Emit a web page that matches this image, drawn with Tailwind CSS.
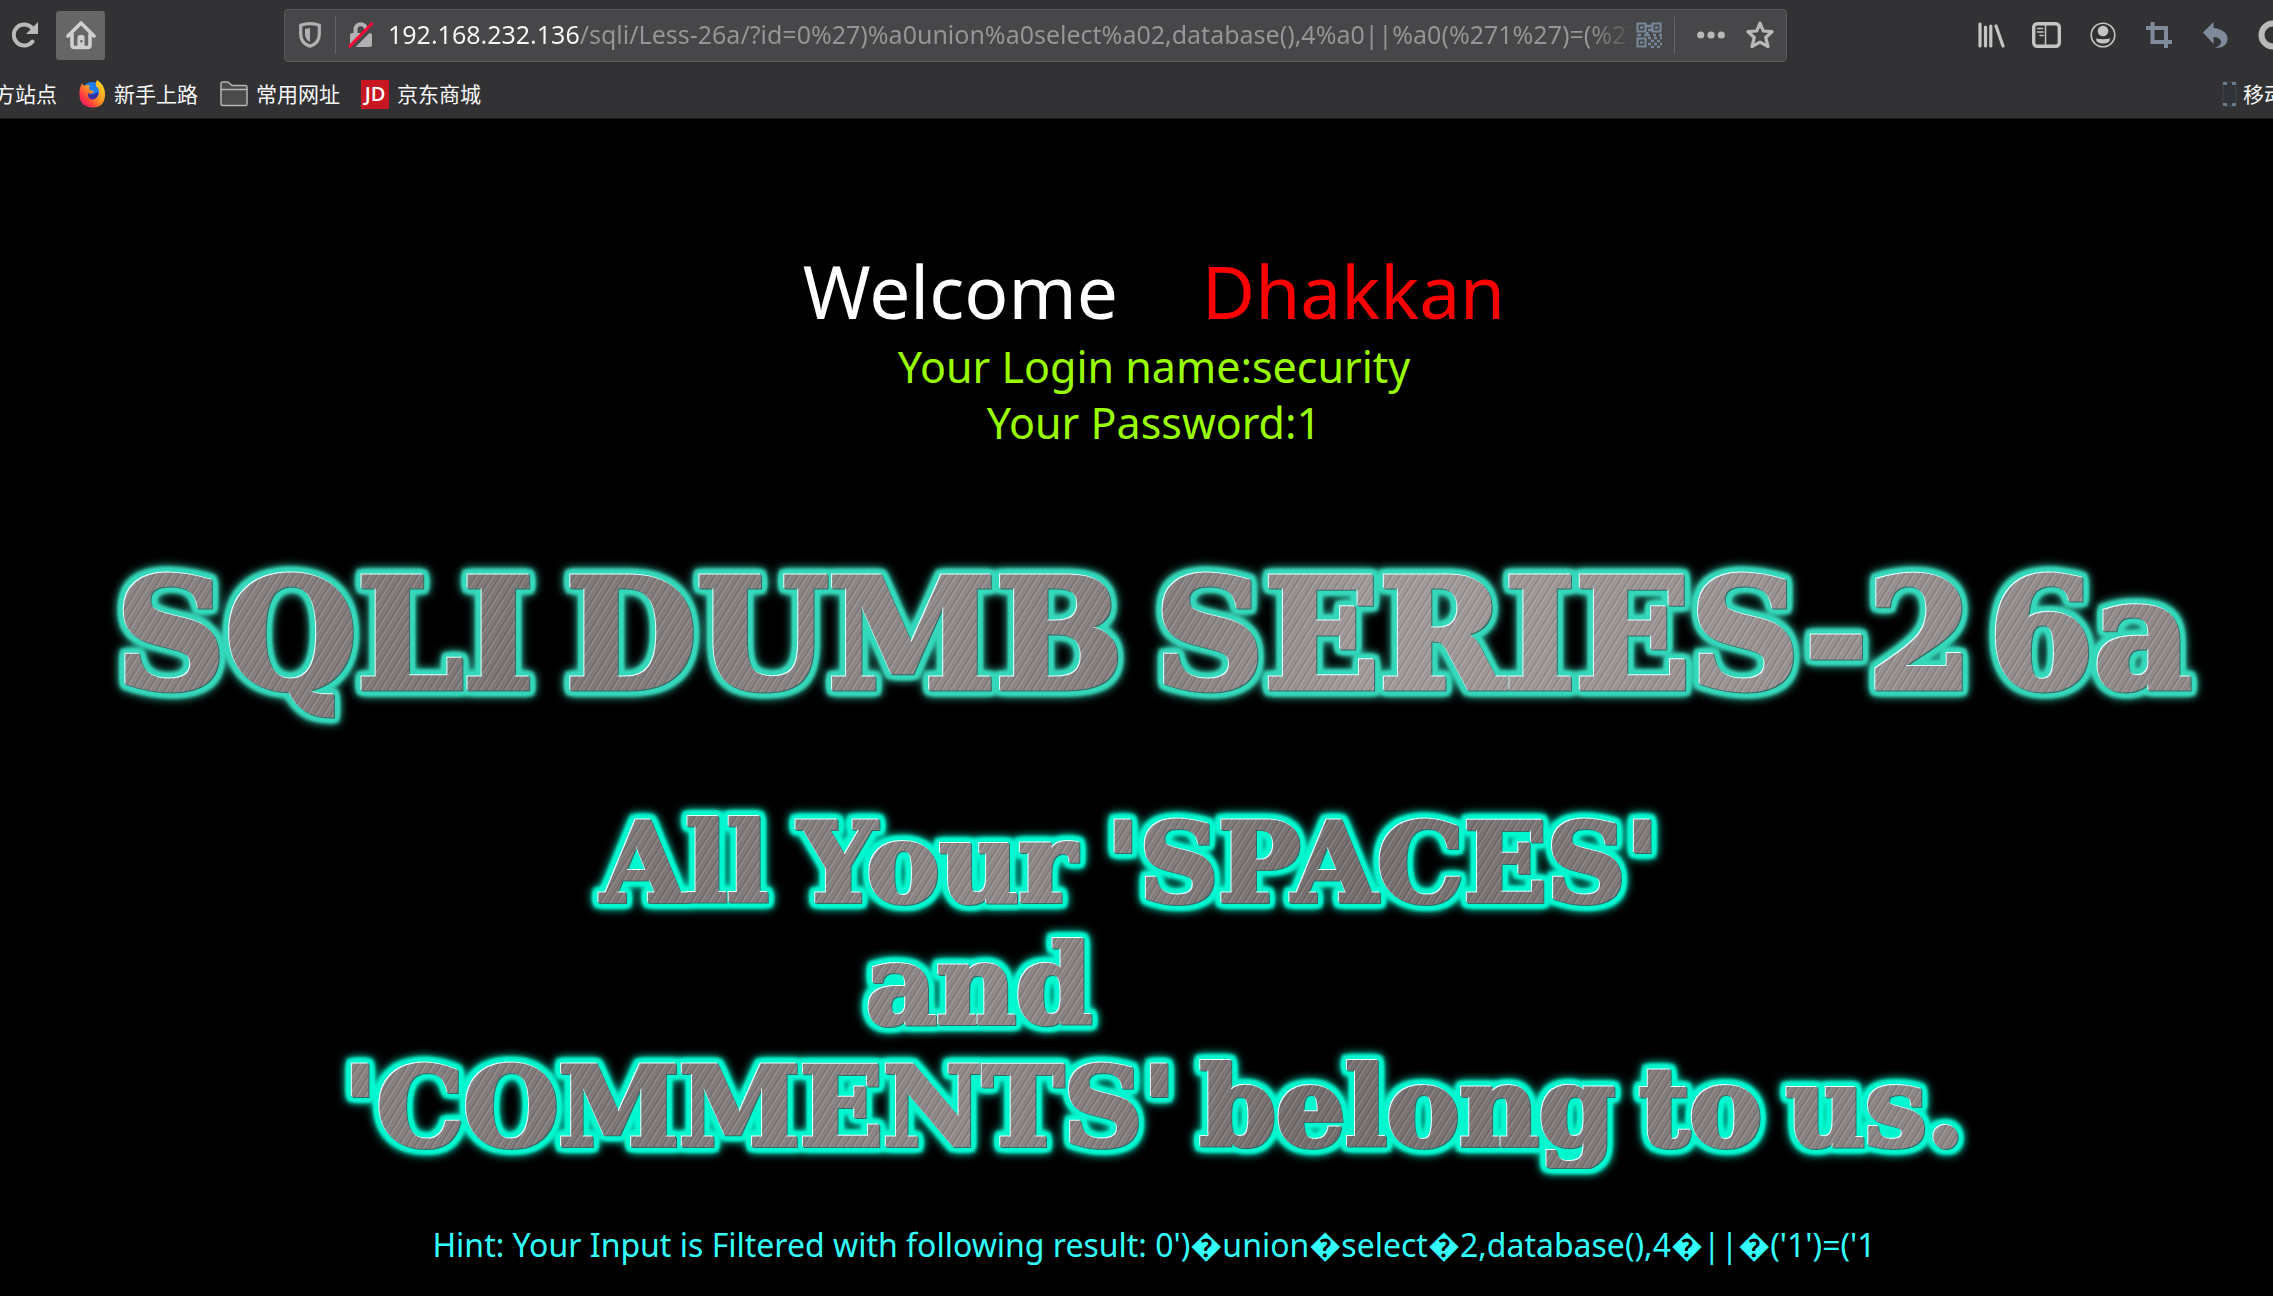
<!DOCTYPE html>
<html lang="zh-CN">
<head>
<meta charset="utf-8">
<title>Less-26a</title>
<script src="https://cdn.jsdelivr.net/npm/@tailwindcss/browser@4"></script>
</head>
<body class="min-h-screen overflow-x-hidden bg-black font-['Noto_Sans','Noto_Sans_CJK_SC',sans-serif]">
<header class="overflow-hidden bg-[#323234] text-[#c4c4c4]">
  <nav class="flex h-[70px] items-center overflow-hidden pl-3" aria-label="Toolbar">
    <button class="size-[26px] shrink-0" aria-label="Reload">
      <svg viewBox="0 0 26 26" fill="none" stroke="#b9b9ba" stroke-width="4" stroke-linecap="round"><path d="M20.500 19.500A10.500 10.500 0 1 1 20.500 6.500"/><path d="M26 0V12H14Z" fill="#b9b9ba" stroke="none"/></svg>
    </button>
    <button class="ml-[18px] flex size-[49px] shrink-0 items-center justify-center rounded-[3px] bg-[#666667]" aria-label="Home">
      <svg class="size-[30px]" viewBox="0 0 30 30" fill="none" stroke="#cfcfcf" stroke-width="3.600" stroke-linecap="round" stroke-linejoin="round"><path d="M2 16 15 3 28 16M6 14V25Q6 27.500 8.500 27.500H21.500Q24 27.500 24 25V14"/><path d="M11.500 27V17.500Q11.500 15 14 15H16Q18.500 15 18.500 17.500V27Z" fill="#cfcfcf" stroke="none"/><rect x="14.500" y="20" width="1.800" height="2.500" fill="#555" stroke="none"/></svg>
    </button>
    <div class="ml-[179px] flex h-[53px] min-w-0 flex-1 items-center rounded border border-[#5b5b5e] bg-[#474749] pl-3.5 pr-3 shadow-sm">
      <svg class="w-[22px] shrink-0" viewBox="0 0 22 26"><path d="M11 1.700Q16 1.700 20.300 3.200V12Q20.300 21 11 24.300Q1.700 21 1.700 12V3.200Q6 1.700 11 1.700Z" fill="none" stroke="#b1b1b3" stroke-width="3.200"/><path d="M11 6V20Q6 17 6 12V7Z" fill="#b1b1b3"/></svg>
      <span class="ml-3.5 h-[38px] w-px shrink-0 bg-[#62626a]"></span>
      <svg class="ml-3 h-[26px] w-[26px] shrink-0" viewBox="0 0 26 26"><path d="M7.500 12V7.500a5 5 0 0 1 10.500 0V12" fill="none" stroke="#b1b1b3" stroke-width="4"/><rect x="2" y="11" width="22" height="14" rx="2" fill="#b1b1b3"/><path d="M4 26 26 4" stroke="#474749" stroke-width="3.500"/><path d="M2 24 23.500 2" stroke="#ff0039" stroke-width="3.200" stroke-linecap="round"/></svg>
      <input aria-label="Address" type="text" value="192.168.232.136/sqli/Less-26a/?id=0%27)%a0union%a0select%a02,database(),4%a0||%a0(%271%27)=(%271" class="ml-3.5 h-10 min-w-0 flex-1 bg-[linear-gradient(90deg,#f9f9fa_192px,#969698_192px,#969698_calc(100%-44px),transparent)] bg-clip-text pb-0.5 text-[25px] text-transparent outline-none">
      <button class="ml-0.5 size-[26px] shrink-0" aria-label="QR code">
        <svg viewBox="0 0 26 26" fill="none" stroke="#77879a" stroke-width="2.200"><path d="M1.500 1.500h8v8h-8zM16.500 1.500h8v8h-8zM1.500 16.500h8v8h-8z"/><path d="M4 5.500h3M19 5.500h3M4 20.500h3M10 4h6M12 8h4M1 13h4M8 13h6M17 13h3M23 13h3M11 10v3M12 16h3M18 16h3M24 16h2M15 19h3M21 19h3M12 22h3M18 22h3M24 22h2M15 25h3M21 25h3" stroke-width="2.600"/></svg>
      </button>
      <span class="ml-3 h-[37px] w-px shrink-0 bg-[#62626a]"></span>
      <button class="ml-[22px] w-[28px] shrink-0" aria-label="Page actions"><svg viewBox="0 0 28 8" fill="#b8b8b9"><circle cx="3.700" cy="4" r="3.600"/><circle cx="14" cy="4" r="3.600"/><circle cx="24.300" cy="4" r="3.600"/></svg></button>
      <button class="ml-[21px] size-[28px] shrink-0" aria-label="Bookmark"><svg viewBox="0 0 28 28" fill="none" stroke="#b8b8b9" stroke-width="3.200" stroke-linejoin="round"><path d="M14 2.200 17.300 10 26 10.700 19.700 16.500 22 25.500 14 21.200 6 25.500 8.300 16.500 2 10.700 10.700 10Z"/></svg></button>
    </div>
    <div class="ml-[191px] flex w-[295px] shrink-0 items-center">
      <button class="w-[27px] shrink-0" aria-label="Library"><svg viewBox="0 0 27 26" fill="none" stroke="#c4c4c4" stroke-width="3.200" stroke-linecap="round"><path d="M2 2V24M7.500 5V24M12.800 4V24M18 4 25 24"/></svg></button>
      <button class="ml-[27px] w-[29px] shrink-0" aria-label="Sidebars"><svg viewBox="0 0 29 26" fill="none" stroke="#c4c4c4"><rect x="1.700" y="1.700" width="25.600" height="22.600" rx="3.500" stroke-width="3.400"/><path d="M13.500 3V23" stroke-width="1.500"/><path d="M5.500 6.500h5M7 10h4M5.500 10h5M8 13.500h3" stroke-width="1.600" stroke-linecap="round"/></svg></button>
      <button class="ml-[29px] w-[26px] shrink-0" aria-label="Account"><svg viewBox="0 0 26 26" fill="#c4c4c4"><circle cx="13" cy="13" r="11.800" fill="none" stroke="#c4c4c4" stroke-width="1.600"/><circle cx="13" cy="9" r="5.300"/><path d="M6 16.500Q13 18 20 16.500Q20 21.500 13 21.500Q6 21.500 6 16.500Z"/></svg></button>
      <button class="ml-[30px] w-[26px] shrink-0" aria-label="Crop"><svg viewBox="0 0 26 26" fill="none" stroke="#7f8b9a" stroke-width="4"><path d="M6.500 0V20H26M0 6H20V26"/></svg></button>
      <button class="ml-[31px] w-[26px] shrink-0" aria-label="Undo"><svg viewBox="0 0 26 26" fill="#7f8b9a"><path d="M10.500 0V6Q24.500 8 24.500 17Q24 26 12 26Q19 23 18 19Q16 15 10.500 15V22L0 10.500Z"/></svg></button>
      <button class="ml-[29px] w-[30px] shrink-0" aria-label="Extension"><svg viewBox="0 0 30 30"><circle cx="15" cy="15" r="11.500" fill="none" stroke="#b9b9ba" stroke-width="6"/></svg></button>
    </div>
  </nav>
  <nav class="flex h-[49px] items-center overflow-hidden whitespace-nowrap border-b border-[#1a1a1c] text-[21px] leading-7 text-[#f9f9fa]" aria-label="Bookmarks">
    <a href="#" class="-ml-[6px] shrink-0">方站点</a>
    <a href="#" class="ml-[22px] flex shrink-0 items-center gap-2"><svg class="w-[27px]" viewBox="0 0 27 28"><defs><linearGradient id="fox" x1="1" y1="0" x2="0" y2="1"><stop offset="0" stop-color="#ffe82e"/><stop offset=".45" stop-color="#ff9a1f"/><stop offset=".75" stop-color="#ff3245"/><stop offset="1" stop-color="#e8128c"/></linearGradient></defs><circle cx="13.500" cy="13" r="11" fill="#1c7cf0"/><path d="M18 0Q26 5 26 14Q26 27.500 13.500 27.500Q1 27 0.500 15Q0 8 3 3.500L5 6Q8 4 11 6Q9 8 11 10L15 11Q14 14 10 14Q10 18 14 18.500Q20 18 20 12Q20 8 17 6Q16 3 18 0Z" fill="url(#fox)"/><path d="M9 13Q13 16 17 13Q20 11 19 15Q17 20 12.500 19.500Q8 18 9 13Z" fill="#3b2fa0"/></svg>新手上路</a>
    <a href="#" class="ml-[22px] flex shrink-0 items-center gap-2"><svg class="w-[28px]" viewBox="0 0 28 26" fill="#4b4b4c" stroke="#b5b5b5" stroke-width="1.500" stroke-linejoin="round"><path d="M1 23V2.500Q1 1 2.500 1H8L12 4.500H25.500Q27 4.500 27 6V23Q27 24.500 25.500 24.500H2.500Q1 24.500 1 23ZM1 8.500H27"/></svg>常用网址</a>
    <a href="#" class="ml-[21px] flex shrink-0 items-center gap-2"><span class="flex h-[29px] w-[28px] items-center justify-center bg-[#c91623] font-['Open_Sans',sans-serif] text-xl font-semibold leading-none text-white">JD</span>京东商城</a>
    <a href="#" class="ml-auto flex w-[51px] shrink-0 items-center gap-1.5"><svg class="w-[15px] shrink-0" viewBox="0 0 15 26"><rect x="1" y="1" width="13" height="24" rx="1.500" fill="#303438" stroke="#3e464e"/><path d="M1 1h4v3H1zM10 1h4v3h-4zM1 22h4v3H1zM10 22h4v3h-4z" fill="#6b7c8c"/></svg>移动</a>
  </nav>
</header>
<main class="flex flex-col items-center pl-[35px] text-center">
  <h1 class="mt-[124px] flex gap-[84px] text-[73px] leading-[96px] text-white"><span>Welcome</span><span class="text-[#ff0000]">Dhakkan</span></h1>
  <p class="text-[43px] leading-[56px] text-[#99ff00]">Your Login name:security<br>Your Password:1</p>
  <h2 class="mt-[96px] flex gap-[32px] whitespace-nowrap bg-[repeating-linear-gradient(122deg,#ffffff22_0px,#00000011_2px,#ffffff11_3px,#00000022_5px,#ffffff22_7px),linear-gradient(100deg,#8d8585,#7d7676_20%,#928b8b_40%,#857e7e_50%,#a49d9d_60%,#918a8a)] bg-clip-text font-['DejaVu_Serif',serif] text-[151px] font-bold leading-[176px] text-transparent [-webkit-text-stroke:5px_transparent] [filter:drop-shadow(-1px_-1px_0_#e8ffff)_drop-shadow(1px_1px_0_#356b66)_drop-shadow(4px_0_1px_#35d8bb)_drop-shadow(-4px_0_1px_#35d8bb)_drop-shadow(0_4px_1px_#35d8bb)_drop-shadow(0_-4px_1px_#35d8bb)_drop-shadow(0_0_4px_#35d8bb)]"><span>SQLI</span><span>DUMB</span><span>SERIES-2<span class="ml-4">6a</span></span></h2>
  <div class="mt-[79px] flex flex-col whitespace-nowrap bg-[repeating-linear-gradient(122deg,#ffffff22_0px,#00000011_2px,#ffffff11_3px,#00000022_5px,#ffffff22_7px),linear-gradient(100deg,#8d8585,#7d7676_20%,#928b8b_40%,#746d6d_60%,#918a8a)] bg-clip-text font-['DejaVu_Serif',serif] text-[109px] font-bold leading-[122px] text-transparent [-webkit-text-stroke:4px_transparent] [filter:drop-shadow(-1px_-1px_0_#e8ffff)_drop-shadow(1px_1px_0_#356b66)_drop-shadow(4px_0_1px_#00f8d0)_drop-shadow(-4px_0_1px_#00f8d0)_drop-shadow(0_4px_1px_#00f8d0)_drop-shadow(0_-4px_1px_#00f8d0)_drop-shadow(0_0_4px_#00f8d0)]">
    <p class="flex justify-center gap-[30px] pr-12"><span>All</span><span>Your</span><span>'SPACES'</span></p>
    <p class="pr-[350px]">and</p>
    <p class="flex justify-center gap-[24px]"><span>'COMMENTS'</span><span>belong</span><span>to</span><span>us.</span></p>
  </div>
  <p class="mt-[51px] pb-4 whitespace-nowrap text-[32px] leading-[52px] text-[#33ffff]">Hint: Your Input is Filtered with following result: 0')�union�select�2,database(),4�||�('1')=('1</p>
</main>
</body>
</html>
